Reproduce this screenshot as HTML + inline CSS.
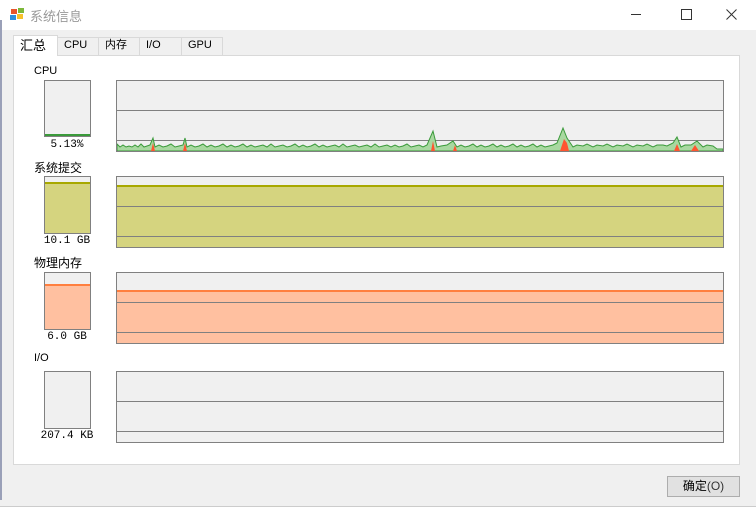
<!DOCTYPE html><html><head><meta charset="utf-8"><style>
body{margin:0;width:756px;height:507px;background:#f0f0f0;position:relative;overflow:hidden;font-family:"Liberation Sans","Noto Sans CJK SC",sans-serif;font-size:12px;color:#000}
.a{position:absolute}
.title{left:0;top:0;width:756px;height:30px;background:#fff}
.box{position:absolute;border:1px solid #808080;background:#f0f0f0;box-sizing:border-box;overflow:hidden}
.gl{position:absolute;left:0;right:0;height:1px;background:#808080}
.lbl{position:absolute;font-size:12px}
.val{position:absolute;font-family:"Liberation Mono","Noto Sans CJK SC",monospace;font-size:11px;text-align:center;width:70px}
.tab{position:absolute;top:37px;height:18px;border:1px solid #d9d9d9;border-bottom:none;background:#f0f0f0;box-sizing:border-box;font-size:11px;line-height:15px;padding:0 0 0 6px}
</style></head><body>
<div class="a title"></div>
<div class="a" style="left:0;top:20px;width:2px;height:480px;background:#9aa0b8"></div>
<svg class="a" style="left:9px;top:6px" width="16" height="16"><rect x="2" y="3" width="6" height="5" fill="#e8552a"/><rect x="9" y="2" width="6" height="5" fill="#7cb83a"/><rect x="1" y="9" width="6" height="5" fill="#2f8fdd"/><rect x="8" y="8" width="6" height="5" fill="#f6c12b"/></svg>
<div class="a" style="left:30px;top:6px;font-size:13px;color:#999">系统信息</div>
<div class="a" style="left:631px;top:14px;width:10px;height:1px;background:#333"></div>
<div class="a" style="left:681px;top:9px;width:9px;height:9px;border:1px solid #333"></div>
<svg class="a" style="left:726px;top:9px" width="11" height="11"><path d="M0.5 0.5L10.5 10.5M10.5 0.5L0.5 10.5" stroke="#333" stroke-width="1"/></svg>
<div class="a" style="left:13px;top:55px;width:727px;height:410px;background:#fff;border:1px solid #d9d9d9;box-sizing:border-box"></div>
<div class="tab" style="left:57px;width:42px">CPU</div>
<div class="tab" style="left:98px;width:42px">内存</div>
<div class="tab" style="left:139px;width:43px">I/O</div>
<div class="tab" style="left:181px;width:42px">GPU</div>
<div class="tab" style="left:13px;top:35px;width:45px;height:21px;background:#fff;font-size:13px;line-height:19px;padding:0 0 0 6px">汇总</div>

<div class="lbl" style="left:34px;top:65px;font-size:11px">CPU</div>
<div class="box" style="left:44px;top:80px;width:47px;height:57px"><div class="a" style="left:0;right:0;bottom:0;height:2px;background:#3a9a3a"></div></div>
<div class="val" style="left:32px;top:139px">5.13%</div>
<div class="box" style="left:116px;top:80px;width:608px;height:72px"><div class="gl" style="top:29px"></div><div class="gl" style="top:59px"></div>
<svg class="a" style="left:0;top:0" width="606" height="70"><polygon fill="#a8d8a0" stroke="#3a9a3a" stroke-width="1" points="0,70 0,63 3,66 6,64 9,66 12,65 15,66 18,64 21,66 24,63 27,66 30,65 33,64 36,57 38,66 42,64 46,66 50,65 54,63 58,66 62,65 66,64 68,57 70,66 74,64 78,66 82,65 86,63 90,66 94,64 98,66 102,65 106,63 110,66 114,64 118,66 122,65 126,63 130,66 134,64 138,66 142,65 146,64 150,66 154,63 158,66 162,65 166,64 170,66 174,65 178,63 182,66 186,64 190,66 194,65 198,63 202,66 206,64 210,66 214,65 218,64 222,66 226,63 230,66 234,65 238,64 242,66 246,65 250,64 254,66 258,63 262,66 266,65 270,64 274,66 278,64 282,66 286,65 290,63 294,66 298,65 302,64 306,66 310,64 316,50 320,66 324,65 330,64 336,60 340,66 344,64 348,66 352,65 356,63 360,66 364,64 368,66 372,65 376,63 380,66 384,64 388,66 392,65 396,63 400,66 404,64 408,66 412,65 416,63 420,66 424,64 428,66 432,65 436,64 440,62 446,47 450,57 456,66 460,64 466,65 470,63 476,66 480,64 486,65 490,63 496,66 500,64 506,65 510,63 516,66 520,64 526,65 530,63 536,66 540,64 546,64 550,65 556,62 560,56 564,66 568,64 574,64 580,60 586,66 590,64 596,65 600,68 606,68 606,70"/>
<polygon fill="#ff5530" points="34,70 36,62 38,70 66,70 68,62 70,70 314,70 316,60 318,70 336,70 338,64 340,70 443,70 447,58 450,62 452,70 557,70 560,63 563,70 574,70 578,64 582,70"/></svg></div>

<div class="lbl" style="left:34px;top:159px">系统提交</div>
<div class="box" style="left:44px;top:176px;width:47px;height:58px"><div class="a" style="left:0;right:0;bottom:0;height:49px;background:#d5d47f;border-top:2px solid #a8a800"></div></div>
<div class="val" style="left:32px;top:235px">10.1 GB</div>
<div class="box" style="left:116px;top:176px;width:608px;height:72px"><div class="a" style="left:0;right:0;bottom:0;height:60px;background:#d5d47f;border-top:2px solid #a8a800"></div><div class="gl" style="top:29px"></div><div class="gl" style="top:59px"></div></div>

<div class="lbl" style="left:34px;top:254px">物理内存</div>
<div class="box" style="left:44px;top:272px;width:47px;height:58px"><div class="a" style="left:0;right:0;bottom:0;height:43px;background:#ffc0a0;border-top:2px solid #ff7f3f"></div></div>
<div class="val" style="left:32px;top:331px">6.0 GB</div>
<div class="box" style="left:116px;top:272px;width:608px;height:72px"><div class="a" style="left:0;right:0;bottom:0;height:51px;background:#ffc0a0;border-top:2px solid #ff7f3f"></div><div class="gl" style="top:29px"></div><div class="gl" style="top:59px"></div></div>

<div class="lbl" style="left:34px;top:352px;font-size:11px">I/O</div>
<div class="box" style="left:44px;top:371px;width:47px;height:58px"></div>
<div class="val" style="left:32px;top:430px">207.4 KB</div>
<div class="box" style="left:116px;top:371px;width:608px;height:72px"><div class="gl" style="top:29px"></div><div class="gl" style="top:59px"></div></div>

<div class="a" style="left:667px;top:476px;width:73px;height:21px;border:1px solid #adadad;background:#e1e1e1;box-sizing:border-box;text-align:center;font-size:12px;line-height:19px">确定<span style="color:#333">(O)</span></div>
<div class="a" style="left:0;top:506px;width:756px;height:1px;background:#ccc"></div>
</body></html>
